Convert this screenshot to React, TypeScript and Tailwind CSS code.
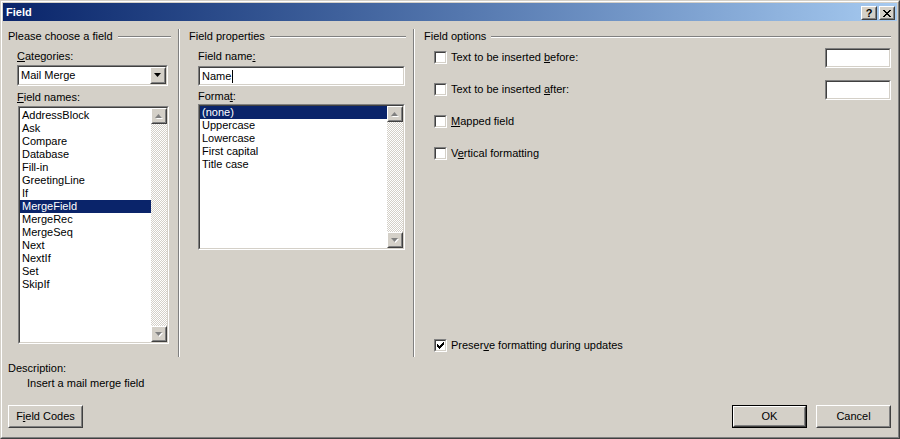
import React from 'react'

const leftItems = ['AddressBlock', 'Ask', 'Compare', 'Database', 'Fill-in', 'GreetingLine', 'If', 'MergeField', 'MergeRec', 'MergeSeq', 'Next', 'NextIf', 'Set', 'SkipIf']
const formatItems = ['(none)', 'Uppercase', 'Lowercase', 'First capital', 'Title case']

function Sunken({ className, children }: { className?: string; children?: React.ReactNode }) {
  return (
    <div className={`border border-t-[#808080] border-l-[#808080] border-b-white border-r-white ${className ?? ''}`}>
      <div className="h-full w-full border border-t-[#404040] border-l-[#404040] border-b-[#d4d0c8] border-r-[#d4d0c8] bg-white">
        {children}
      </div>
    </div>
  )
}

function Raised({ className, children }: { className?: string; children?: React.ReactNode }) {
  return (
    <div className={`border border-t-white border-l-white border-b-[#404040] border-r-[#404040] bg-[#d4d0c8] ${className ?? ''}`}>
      <div className="flex h-full w-full items-center justify-center border border-t-[#d4d0c8] border-l-[#d4d0c8] border-b-[#808080] border-r-[#808080]">
        {children}
      </div>
    </div>
  )
}

function Arrow({ down, disabled }: { down?: boolean; disabled?: boolean }) {
  const pts = down ? '0,0 7,0 3.5,4' : '3.5,0 7,4 0,4'
  return (
    <svg width="8" height="5" viewBox="0 0 8 5" className="overflow-visible">
      {disabled && <polygon points={pts} fill="#fff" transform="translate(1,1)" />}
      <polygon points={pts} fill={disabled ? '#808080' : '#000'} />
    </svg>
  )
}

function ScrollBar() {
  return (
    <div className="flex h-full w-[16px] flex-col bg-[image:repeating-conic-gradient(#fff_0%_25%,#d4d0c8_0%_50%)] bg-[length:2px_2px]">
      <Raised className="h-[16px] w-[16px]">
        <Arrow disabled />
      </Raised>
      <div className="flex-1" />
      <Raised className="h-[16px] w-[16px]">
        <Arrow down disabled />
      </Raised>
    </div>
  )
}

function ListBox({ items, selected, className, pad }: { items: string[]; selected: number; className?: string; pad?: string }) {
  return (
    <Sunken className={className}>
      <div className="flex h-full">
        <div className={`flex-1 ${pad ?? ''}`}>
          {items.map((it, i) => (
            <div
              key={it}
              className={`h-[13px] pl-[2px] leading-[13px] whitespace-nowrap ${i === selected ? 'bg-[#0a246a] text-white' : 'text-black'}`}
            >
              {it}
            </div>
          ))}
        </div>
        <ScrollBar />
      </div>
    </Sunken>
  )
}

function GroupLabel({ text, pr }: { text: string; pr: string }) {
  return (
    <div className={`flex h-[13px] items-center ${pr}`}>
      <span className="pr-[5px] leading-[13px]">{text}</span>
      <div className="h-[2px] flex-1 border-t border-t-[#808080] border-b border-b-white" />
    </div>
  )
}

function Separator() {
  return <div className="h-full w-[2px] border-l border-l-[#808080] border-r border-r-white" />
}

function CheckBox({ checked }: { checked?: boolean }) {
  return (
    <Sunken className="h-[13px] w-[13px] shrink-0">
      <div className="flex h-full w-full items-center justify-center">
        {checked && (
          <svg width="7" height="7" viewBox="0 0 7 7" shapeRendering="crispEdges">
            <path d="M0 2h1v3h-1z M1 3h1v3h-1z M2 4h1v3h-1z M3 3h1v3h-1z M4 2h1v3h-1z M5 1h1v3h-1z M6 0h1v3h-1z" fill="#000" />
          </svg>
        )}
      </div>
    </Sunken>
  )
}

function Button({ children, isDefault }: { children: React.ReactNode; isDefault?: boolean }) {
  if (isDefault) {
    return (
      <div className="h-[23px] w-[75px] border border-black">
        <Raised className="h-full w-full">{children}</Raised>
      </div>
    )
  }
  return <Raised className="h-[23px] w-[75px]">{children}</Raised>
}

export default function App() {
  return (
    <div className="h-[439px] w-[900px] border border-t-[#d4d0c8] border-l-[#d4d0c8] border-b-[#404040] border-r-[#404040] bg-[#d4d0c8] font-['Liberation_Sans',Arial,sans-serif] text-[11px] leading-[13px] text-black">
      <div className="flex h-full w-full flex-col border border-t-white border-l-white border-b-[#808080] border-r-[#808080] p-[1px]">
        {/* Title bar */}
        <div className="flex h-[18px] items-center bg-gradient-to-r from-[#0a246a] to-[#a6caf0] pl-[3px] pr-[2px]">
          <span className="flex-1 text-[11px] font-bold text-white">Field</span>
          <Raised className="mt-[2px] h-[14px] w-[16px]">
            <span className="text-[11px] leading-[11px] font-bold">?</span>
          </Raised>
          <Raised className="mt-[2px] ml-[2px] h-[14px] w-[16px]">
            <svg width="8" height="7" viewBox="0 0 8 7" shapeRendering="crispEdges">
              <path d="M0 0h2v1h-2z M6 0h2v1h-2z M1 1h2v1h-2z M5 1h2v1h-2z M2 2h4v1h-4z M3 3h2v1h-2z M2 4h4v1h-4z M1 5h2v1h-2z M5 5h2v1h-2z M0 6h2v1h-2z M6 6h2v1h-2z" fill="#000" />
            </svg>
          </Raised>
        </div>

        {/* Body */}
        <div className="flex flex-1 flex-col">
          <div className="mt-[8px] flex h-[328px]">
            {/* Please choose a field */}
            <div className="w-[175px] pt-[1px] pl-[5px]">
              <GroupLabel text="Please choose a field" pr="pr-[7px]" />
              <div className="ml-[9px]">
                <div className="mt-[7px]"><u>C</u>ategories:</div>
                <Sunken className="mt-[2px] h-[21px] w-[151px]">
                  <div className="flex h-full items-center">
                    <span className="flex-1 pl-[2px]">Mail Merge</span>
                    <Raised className="h-[17px] w-[16px]">
                      <Arrow down />
                    </Raised>
                  </div>
                </Sunken>
                <div className="mt-[5px]"><u>F</u>ield names:</div>
                <ListBox items={leftItems} selected={7} pad="pt-[1px]" className="mt-[2px] ml-[1px] h-[238px] w-[151px]" />
              </div>
            </div>
            <Separator />
            {/* Field properties */}
            <div className="w-[233px] pt-[1px] pl-[9px]">
              <GroupLabel text="Field properties" pr="pr-[7px]" />
              <div className="ml-[9px]">
                <div className="mt-[7px]">Field name<u>:</u></div>
                <Sunken className="mt-[3px] h-[20px] w-[207px]">
                  <div className="flex h-full items-center pl-[2px]">
                    <span>Name</span>
                    <span className="ml-[1px] h-[13px] w-[1px] bg-black" />
                  </div>
                </Sunken>
                <div className="mt-[4px]">Forma<u>t</u>:</div>
                <ListBox items={formatItems} selected={0} className="mt-[1px] h-[146px] w-[207px]" />
              </div>
            </div>
            <Separator />
            {/* Field options */}
            <div className="flex flex-1 flex-col pt-[1px] pl-[9px]">
              <GroupLabel text="Field options" pr="pr-[6px]" />
              <div className="ml-[10px] mt-[4px] flex flex-col gap-[12px] pr-[6px]">
                <div className="flex h-[20px] items-center">
                  <CheckBox />
                  <span className="ml-[4px] flex-1">Text to be inserted <u>b</u>efore:</span>
                  <Sunken className="mt-[2px] h-[20px] w-[66px]" />
                </div>
                <div className="flex h-[20px] items-center">
                  <CheckBox />
                  <span className="ml-[4px] flex-1">Text to be inserted <u>a</u>fter:</span>
                  <Sunken className="mt-[2px] h-[20px] w-[66px]" />
                </div>
                <div className="flex h-[20px] items-center">
                  <CheckBox />
                  <span className="ml-[4px]"><u>M</u>apped field</span>
                </div>
                <div className="flex h-[20px] items-center">
                  <CheckBox />
                  <span className="ml-[4px]">V<u>e</u>rtical formatting</span>
                </div>
              </div>
              <div className="mt-auto mb-[5px] ml-[10px] flex h-[13px] items-center">
                <CheckBox checked />
                <span className="ml-[4px]">Preser<u>v</u>e formatting during updates</span>
              </div>
            </div>
          </div>

          {/* Description */}
          <div className="mt-[5px] pl-[5px]">Description:</div>
          <div className="mt-[2px] pl-[24px]">Insert a mail merge field</div>

          {/* Buttons */}
          <div className="mt-[15px] flex items-center px-[5px] pr-[6px]">
            <Button>F<u>i</u>eld Codes</Button>
            <div className="flex-1" />
            <Button isDefault>OK</Button>
            <div className="ml-[9px]">
              <Button>Cancel</Button>
            </div>
          </div>
        </div>
      </div>
    </div>
  )
}
